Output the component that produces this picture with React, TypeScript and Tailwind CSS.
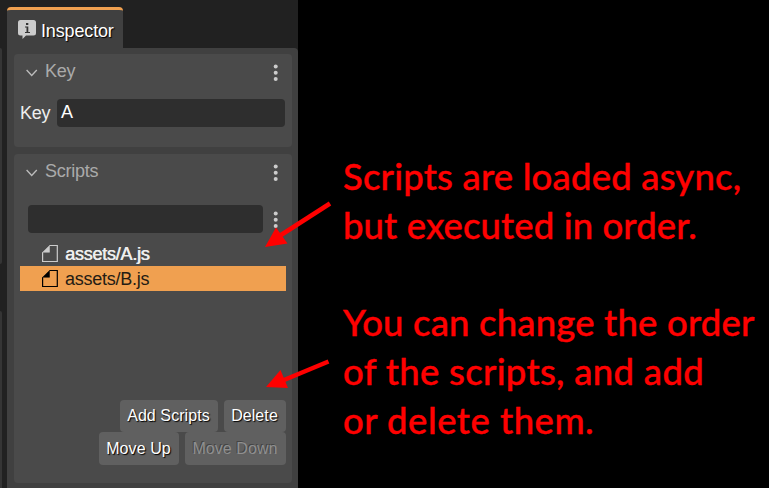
import React from "react";

function Kebab() {
  return (
    <svg width="6" height="18" viewBox="0 0 6 18" className="shrink-0 fill-[#cccccc]">
      <circle cx="2.700" cy="2.400" r="2" />
      <circle cx="2.700" cy="8.700" r="2" />
      <circle cx="2.700" cy="15" r="2" />
    </svg>
  );
}

function SectionHeader({ title }: { title: string }) {
  return (
    <div className="flex h-[35px] items-center pl-3 pr-[13px]">
      <svg width="12" height="8" viewBox="0 0 12 8" className="mt-[2px] fill-none stroke-[#bdbdbd]" strokeWidth="1.3">
        <path d="M.6 1 5.700 6.500 10.800 1" />
      </svg>
      <h2 className="-mt-[2px] ml-[7px] flex-1 text-[18px] leading-5 tracking-[-0.25px] text-[#aaaaaa]">{title}</h2>
      <div className="mt-[2px]">
        <Kebab />
      </div>
    </div>
  );
}

function FileRow({ name, selected = false }: { name: string; selected?: boolean }) {
  return (
    <div className={`flex h-[25px] items-center pl-[22px] text-[18px] leading-5 tracking-[-0.25px] ${selected ? "bg-[#f0a050] text-[#241c14]" : "text-[#eeeeee]"}`}>
      <svg width="16" height="17" viewBox="0 0 16 17" className={`shrink-0 ${selected ? "fill-black stroke-black" : "fill-[#cccccc] stroke-[#cccccc]"}`}>
        <path d="M7.500.500h7.800v16H.600V7.300" fill="none" strokeWidth="1.2" />
        <path d="M7.500 .500v6.800H.600z" strokeWidth=".5" />
      </svg>
      <span className={`ml-[7px] ${selected ? "" : "[text-shadow:0.6px_0_0_#eeeeee]"}`}>{name}</span>
    </div>
  );
}

function Button({ label, size, disabled = false }: { label: string; size: string; disabled?: boolean }) {
  return (
    <button
      disabled={disabled}
      className={`${size} rounded bg-[#606060] pr-px text-center text-[16px] tracking-[0.08px] whitespace-nowrap ${disabled ? "text-[#8f8f8f] [text-shadow:-1px_-1px_0_#444444]" : "text-white [text-shadow:1px_1px_1px_#000000]"}`}
    >
      {label}
    </button>
  );
}

function Inspector() {
  return (
    <section className="flex w-[291px] flex-col pt-[7px]">
      <div className="flex h-[41px] w-[116px] items-center rounded-t border-t-[3px] border-[#f0a050] bg-[#404040] pl-[11px]">
        <svg width="18" height="19" viewBox="0 0 18 19" className="shrink-0">
          <path d="M2.500 0h13Q18 0 18 2.500v10.500Q18 15.500 15.500 15.500H8L4.500 19v-3.500h-2Q0 15.500 0 13v-10.500Q0 0 2.500 0z" fill="#cccccc" />
          <path d="M8 3h2.300v2H8zM7 6.500h3.300V12H12v1H7v-1h1.500V7.500H7z" fill="#333333" />
        </svg>
        <span className="ml-[5px] mt-[3px] text-[18px] leading-5 tracking-[-0.15px] text-white [text-shadow:1px_1px_1px_#000000]">Inspector</span>
      </div>
      <div className="flex flex-1 flex-col gap-[7px] rounded-tr bg-[#404040] px-[6px] pt-[6px] pb-[5px] pl-[7px]">
        <div className="h-[93px] rounded bg-[#4a4a4a]">
          <SectionHeader title="Key" />
          <div className="mt-[10px] flex items-center pl-[6px] pr-[7px] text-[18px]">
            <span className="w-[37px] tracking-[-0.25px] text-[#eeeeee]">Key</span>
            <div className="h-7 flex-1 rounded bg-[#2e2e2e] pl-1 leading-[27px] text-white">A</div>
          </div>
        </div>
        <div className="flex flex-1 flex-col rounded bg-[#4a4a4a]">
          <SectionHeader title="Scripts" />
          <div className="mt-4 flex items-center pl-[14px] pr-[13px]">
            <div className="mr-[10px] h-7 flex-1 rounded bg-[#2e2e2e]" />
            <div className="mt-[2px]">
              <Kebab />
            </div>
          </div>
          <div className="mx-[6px] mt-2">
            <FileRow name="assets/A.js" />
            <FileRow name="assets/B.js" selected />
          </div>
          <div className="mt-auto mb-[18px] flex flex-col items-end pr-[6px]">
            <div className="flex gap-[6px]">
              <Button label="Add Scripts" size="h-8 w-[98px]" />
              <Button label="Delete" size="h-8 w-[62px]" />
            </div>
            <div className="flex gap-[6px]">
              <Button label="Move Up" size="h-[33px] w-[80px]" />
              <Button label="Move Down" size="h-[33px] w-[101px]" disabled />
            </div>
          </div>
        </div>
      </div>
    </section>
  );
}

export default function App() {
  return (
    <main className="relative flex h-[488px] w-[769px] overflow-hidden bg-black font-['Liberation_Sans',Arial,sans-serif]">
      <div className="flex w-[298px] bg-[#212121]">
        <div className="mr-[5px] flex w-[2px] flex-col pt-12">
          <div className="h-[216px] rounded-r-sm bg-[#353535]" />
          <div className="mt-[47px] flex-1 rounded-tr-sm bg-[#353535]" />
        </div>
        <Inspector />
      </div>
      <div className="pl-[45px] pt-[152px] font-['Lato',sans-serif] text-[36.5px] leading-[49px] font-medium whitespace-nowrap text-[#ff0000] [-webkit-text-stroke:0.4px_#ff0000]">
        <p className="tracking-[0.18px]">Scripts are loaded async,</p>
        <p className="tracking-[0.1px]">but executed in order.</p>
        <p className="mt-12 tracking-[0.17px]">You can change the order</p>
        <p className="tracking-[0.3px]">of the scripts, and add</p>
        <p className="tracking-[0.5px]">or delete them.</p>
      </div>
      <svg className="pointer-events-none absolute inset-0" width="769" height="488" fill="#ff0000" stroke="#ff0000">
        <path d="M330 203.500 281 235" strokeWidth="4.500" />
        <path d="M265 247 276 227.500 287.500 243.500z" stroke="none" />
        <path d="M328.500 361.500 284 380" strokeWidth="4.500" />
        <path d="M266 387 280.500 370 288 388z" stroke="none" />
      </svg>
    </main>
  );
}
